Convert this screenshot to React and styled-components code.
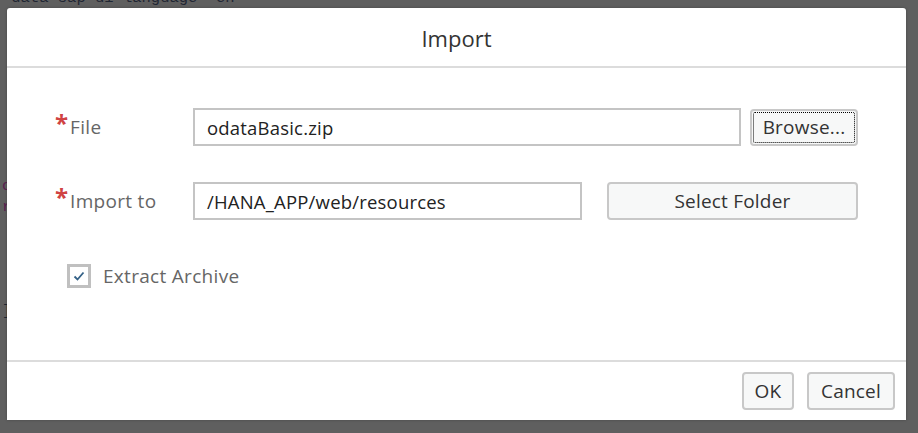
import React from "react";
import styled, { createGlobalStyle } from "styled-components";

const Global = createGlobalStyle`
  html, body { margin: 0; padding: 0; }
  body {
    width: 918px;
    height: 433px;
    overflow: hidden;
    background: #5f5f5f;
    font-family: "Open Sans", "Noto Sans", sans-serif;
  }
`;

const Stage = styled.div`
  position: relative;
  width: 918px;
  height: 433px;
  overflow: hidden;
  background: #5f5f5f;
`;

const Code = styled.div`
  margin-top: -12px;
  padding-left: 2px;
  font-family: "Liberation Mono", monospace;
  font-size: 15.5px;
`;

const CodeLine = styled.div`
  height: 20.9px;
  line-height: 20.9px;
  white-space: pre;
  color: ${(p) => p.$c || "#1f2633"};
`;

const Dialog = styled.div`
  position: absolute;
  left: 7px;
  top: 8px;
  width: 899px;
  height: 412px;
  background: #fff;
  border-radius: 3px 3px 0 0;
  display: flex;
  flex-direction: column;
  box-shadow: 0 0 3px rgba(0, 0, 0, 0.25);
`;

const Header = styled.div`
  height: 57px;
  display: flex;
  align-items: center;
  justify-content: center;
  border-bottom: 2px solid #dcdcdc;
  padding-top: 1px;
`;

const Title = styled.h1`
  margin: 0;
  font-weight: 400;
  font-size: 22px;
  color: #333;
`;

const Content = styled.div`
  flex: 1;
  padding: 40px 48px 0 48px;
  display: flex;
  flex-direction: column;
`;

const Row = styled.div`
  display: flex;
  align-items: center;
  height: 38px;
  margin-bottom: ${(p) => p.$mb || 0}px;
`;

const Label = styled.label`
  width: 138px;
  flex: none;
  display: flex;
  align-items: center;
  font-size: 19px;
  letter-spacing: 0.3px;
  color: #666;
`;

const Star = styled.span`
  color: #d04343;
  font-size: 24px;
  font-weight: 700;
  line-height: 1;
  margin-right: 2px;
  position: relative;
  top: -4px;
  letter-spacing: 0;
`;

const Input = styled.div`
  box-sizing: border-box;
  width: ${(p) => p.$w}px;
  height: 38px;
  border: 2px solid #c4c4c4;
  background: #fff;
  display: flex;
  align-items: center;
  padding-left: 12px;
  font-size: 18.5px;
  letter-spacing: 0.2px;
  color: #222;
  flex: none;
`;

const Button = styled.button`
  box-sizing: border-box;
  width: ${(p) => p.$w}px;
  height: ${(p) => p.$h || 38}px;
  margin-left: ${(p) => p.$ml || 0}px;
  background: #f7f8f8;
  border: 2px solid #c8c8c8;
  border-radius: 4px;
  font-family: inherit;
  font-size: 19px;
  letter-spacing: 0.2px;
  color: #333;
  padding: 0;
  flex: none;
  position: relative;
  display: flex;
  align-items: center;
  justify-content: center;
  cursor: pointer;
  ${(p) =>
    p.$focus &&
    `
    &::after {
      content: "";
      position: absolute;
      inset: 1px;
      border: 1px dotted #000;
      border-radius: 2px;
    }
  `}
`;

const CheckRow = styled.div`
  display: flex;
  align-items: center;
  margin-top: 43px;
  padding-left: 12px;
`;

const Box = styled.span`
  box-sizing: border-box;
  width: 24px;
  height: 24px;
  border: 3px solid #c0c0c0;
  display: flex;
  align-items: center;
  justify-content: center;
  margin-right: 12px;
`;

const CheckLabel = styled.span`
  font-size: 19px;
  letter-spacing: 0.3px;
  color: #666;
`;

const Footer = styled.div`
  height: 58px;
  border-top: 2px solid #dcdcdc;
  display: flex;
  align-items: center;
  justify-content: flex-end;
  padding-right: 11px;
  gap: 13px;
`;

const codeLines = [
  { t: ' data-sap-ui-language="en"' },
  { t: "" },
  { t: "" },
  { t: "" },
  { t: "" },
  { t: "" },
  { t: "" },
  { t: "" },
  { t: "" },
  { t: "c", c: "#5a2150" },
  { t: "r", c: "#5a2150" },
  { t: "" },
  { t: "" },
  { t: "" },
  { t: "" },
  { t: "]" },
];

export default function App() {
  return (
    <Stage>
      <Global />
      <Code>
        {codeLines.map((l, i) => (
          <CodeLine key={i} $c={l.c}>
            {l.t || " "}
          </CodeLine>
        ))}
      </Code>
      <Dialog>
        <Header>
          <Title>Import</Title>
        </Header>
        <Content>
          <Row $mb={36}>
            <Label>
              <Star>*</Star>File
            </Label>
            <Input $w={548}>odataBasic.zip</Input>
            <Button $w={108} $h={37} $ml={9} $focus>
              Browse...
            </Button>
          </Row>
          <Row>
            <Label>
              <Star>*</Star>Import to
            </Label>
            <Input $w={389}>/HANA_APP/web/resources</Input>
            <Button $w={251} $ml={25}>
              Select Folder
            </Button>
          </Row>
          <CheckRow>
            <Box>
              <svg width="14" height="12" viewBox="0 0 14 12">
                <path d="M2.5 6.5 L5.5 9.5 L11.5 2.5" fill="none" stroke="#346187" strokeWidth="1.8" />
              </svg>
            </Box>
            <CheckLabel>Extract Archive</CheckLabel>
          </CheckRow>
        </Content>
        <Footer>
          <Button $w={52}>OK</Button>
          <Button $w={88}>Cancel</Button>
        </Footer>
      </Dialog>
    </Stage>
  );
}
